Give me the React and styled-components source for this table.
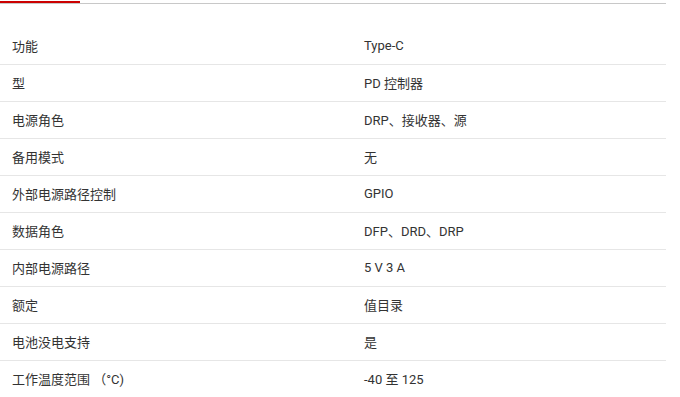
import React from "react"
import styled, { createGlobalStyle } from "styled-components"

const GlobalStyle = createGlobalStyle`
  html, body {
    margin: 0;
    padding: 0;
    background: #fff;
  }
  body {
    font-family: Roboto, "Noto Sans CJK SC", sans-serif;
    color: #333;
  }
`

const Page = styled.div`
  width: 666px;
  padding-top: 1px;
`

const Tabs = styled.div`
  height: 2px;
  border-bottom: 1px solid #c8c8c8;
  margin-bottom: 24px;
`

const ActiveTab = styled.div`
  width: 80px;
  height: 2px;
  background: #cc0000;
`

const Table = styled.div`
  display: grid;
  grid-template-columns: 352px 1fr;
`

const Cell = styled.div`
  box-sizing: border-box;
  height: 37px;
  display: flex;
  align-items: center;
  padding: 0 0 2px 12px;
  font-size: 13px;
  border-bottom: ${props => (props.last ? "none" : "1px solid #e6e6e6")};
`

const rows = [
  ["功能", "Type-C"],
  ["型", "PD 控制器"],
  ["电源角色", "DRP、接收器、源"],
  ["备用模式", "无"],
  ["外部电源路径控制", "GPIO"],
  ["数据角色", "DFP、DRD、DRP"],
  ["内部电源路径", "5 V 3 A"],
  ["额定", "值目录"],
  ["电池没电支持", "是"],
  ["工作温度范围 （°C)", "-40 至 125"],
]

export default function App() {
  return (
    <>
      <GlobalStyle />
      <Page>
        <Tabs>
          <ActiveTab />
        </Tabs>
        <Table>
          {rows.map(([label, value], i) => (
            <React.Fragment key={label}>
              <Cell last={i === rows.length - 1}>{label}</Cell>
              <Cell last={i === rows.length - 1}>{value}</Cell>
            </React.Fragment>
          ))}
        </Table>
      </Page>
    </>
  )
}
